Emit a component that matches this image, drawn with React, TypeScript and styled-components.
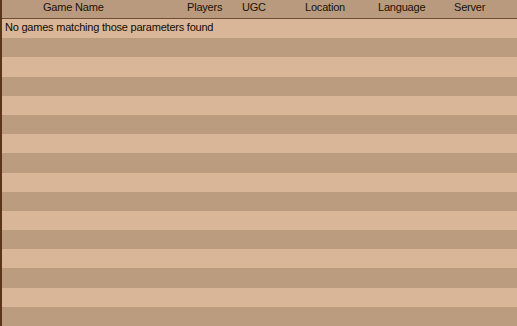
import styled, { createGlobalStyle } from "styled-components";

const columns = [
  { label: "Game Name", width: "185px", pad: 41 },
  { label: "Players", width: "55px", pad: 0 },
  { label: "UGC", width: "63px", pad: 0 },
  { label: "Location", width: "73px", pad: 0 },
  { label: "Language", width: "76px", pad: 0 },
  { label: "Server", width: "1fr", pad: 0 },
];

const ROW_COUNT = 16;

function App() {
  return (
    <>
      <GlobalStyle />
      <Frame>
        <Header $cols={columns.map((c) => c.width).join(" ")}>
          {columns.map((col) => (
            <HeaderCell key={col.label} $pad={col.pad}>
              {col.label}
            </HeaderCell>
          ))}
        </Header>
        <Rows>
          {Array.from({ length: ROW_COUNT }).map((_, i) => (
            <Row key={i} $odd={i % 2 === 1}>
              {i === 0 ? "No games matching those parameters found" : ""}
            </Row>
          ))}
        </Rows>
      </Frame>
    </>
  );
}

export default App;

const GlobalStyle = createGlobalStyle`
  html, body {
    margin: 0;
    padding: 0;
    height: 100%;
    overflow: hidden;
    background: #bb9c7f;
  }
  body {
    font-family: "Liberation Sans", Arial, sans-serif;
  }
`;

const Frame = styled.div`
  border-left: 2px solid #5a3519;
  height: 326px;
  overflow: hidden;
  box-sizing: border-box;
  background: #bb9c7f;
`;

const Header = styled.div<{ $cols: string }>`
  display: grid;
  grid-template-columns: ${(p) => p.$cols};
  height: 18px;
  border-bottom: 1px solid #6e4d33;
  background: #b99a7e;
  font-size: 11px;
  letter-spacing: -0.2px;
  line-height: 14px;
  color: #1c1108;
`;

const HeaderCell = styled.div<{ $pad: number }>`
  padding-left: ${(p) => p.$pad}px;
  white-space: nowrap;
`;

const Rows = styled.div`
  display: flex;
  flex-direction: column;
`;

const Row = styled.div<{ $odd: boolean }>`
  height: 19.2px;
  flex-shrink: 0;
  padding-left: 3px;
  font-size: 11px;
  letter-spacing: -0.22px;
  line-height: 17px;
  color: #140b04;
  background: ${(p) => (p.$odd ? "#bb9c7f" : "#d9b697")};
  white-space: nowrap;
`;
